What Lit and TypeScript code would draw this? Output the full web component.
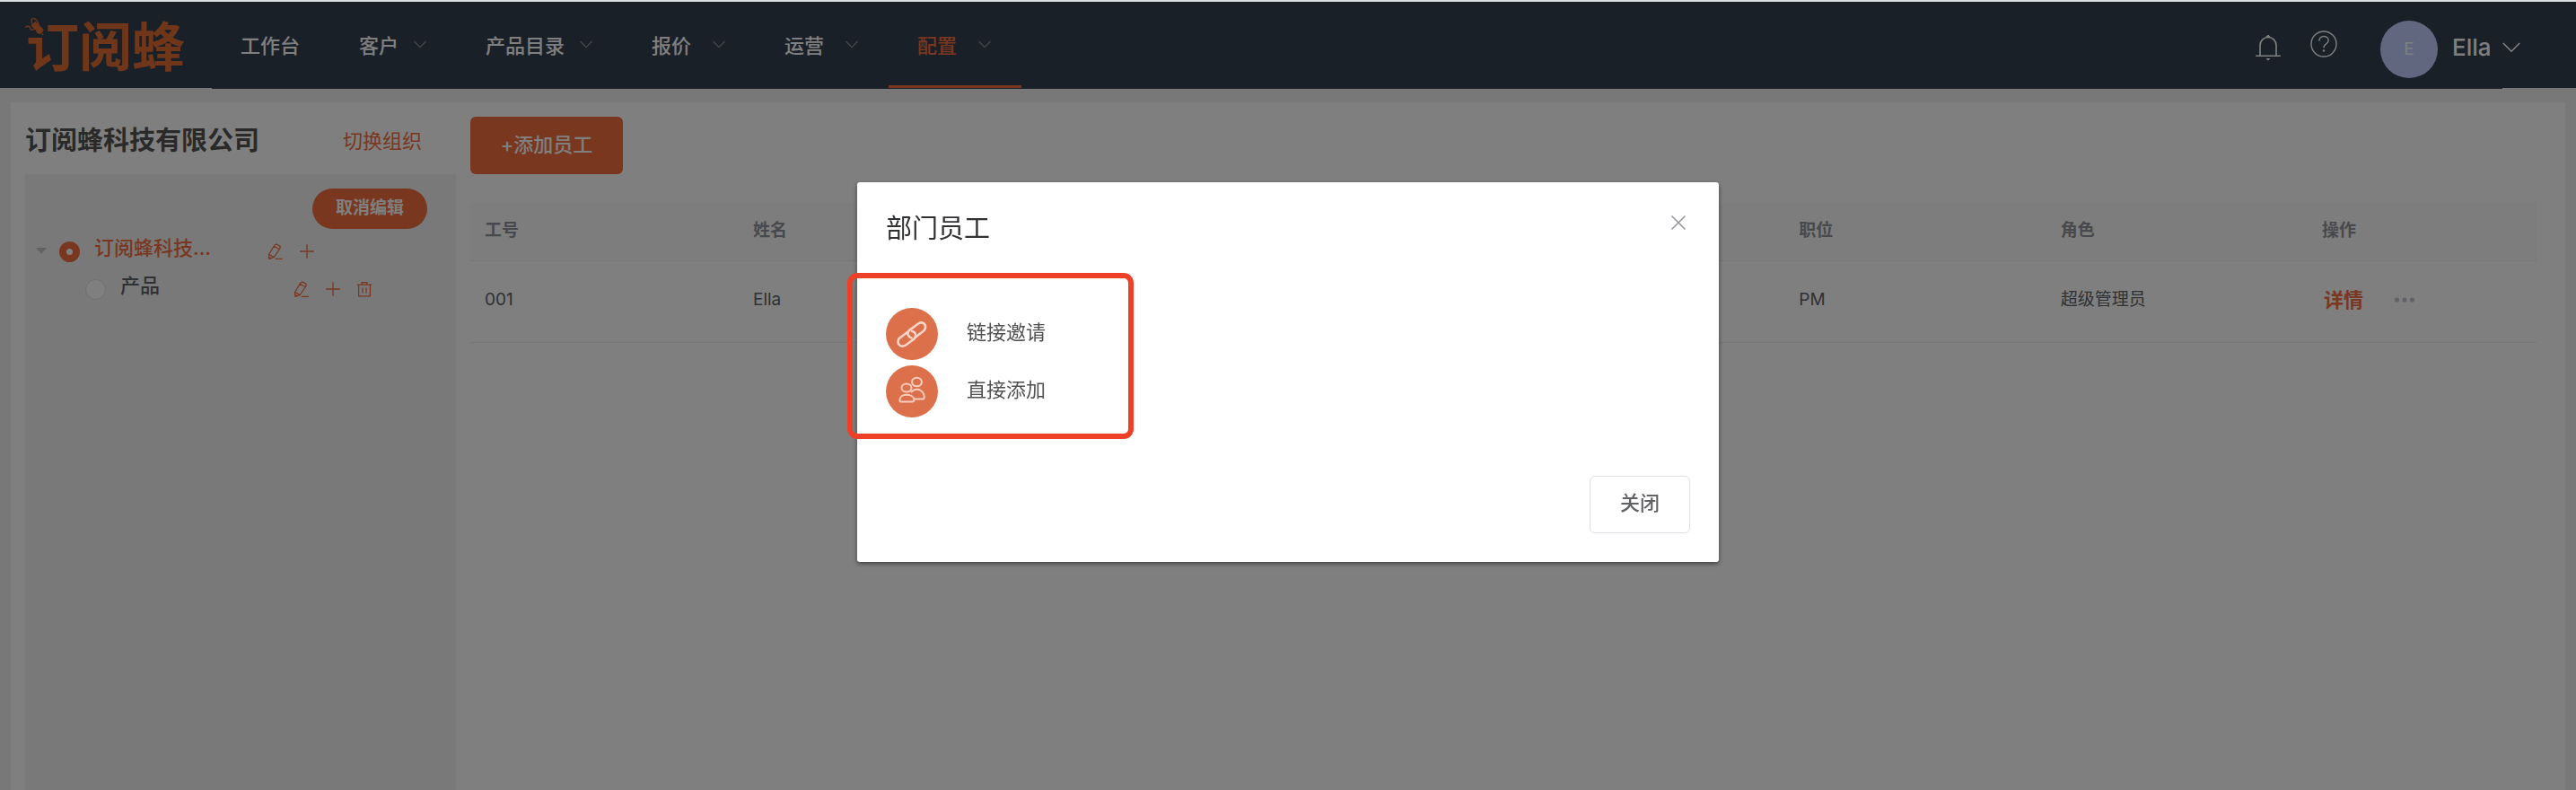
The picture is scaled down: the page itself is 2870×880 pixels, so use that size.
import { LitElement, html, css, svg, nothing } from "lit";
import { customElement, state } from "lit/decorators.js";
import { classMap } from "lit/directives/class-map.js";

interface NavItem {
  label: string;
  menu?: boolean;
  roomy?: boolean;
  active?: boolean;
}

const NAV: NavItem[] = [
  { label: "工作台" },
  { label: "客户", menu: true },
  { label: "产品目录", menu: true },
  { label: "报价", menu: true, roomy: true },
  { label: "运营", menu: true, roomy: true },
  { label: "配置", menu: true, roomy: true, active: true },
];

const COLUMNS = ["工号", "姓名", "", "", "", "职位", "角色"];
const ROWS = [["001", "Ella", "", "", "", "PM", "超级管理员"]];

const stroke = (size: number, body: unknown, width = 1.5) => html`
  <svg width=${size} height=${size} viewBox="0 0 ${size} ${size}" fill="none"
    stroke="currentColor" stroke-width=${width} aria-hidden="true">${body}</svg>`;

const chevron = html`
  <svg width="14" height="9" viewBox="0 0 14 9" fill="none" stroke="currentColor"
    stroke-width="1.3" aria-hidden="true"><path d="M.5 1 7 7.6 13.5 1" /></svg>`;

const pencil = stroke(18, svg`
  <path d="M7.8 2.2 10 1l4.2 2.4-.3 2.4L7.2 15.6 2 17.4l-.6-4.8zM7.2 3.2l6 3.4M1.6 12.4l5.6 3.2M4.4 17l-2.8-2M8.8 17.3h8" />`, 1.2);
const plus = stroke(18, svg`<path d="M9 1.2v15.6M1.2 9h15.6" />`, 1.3);
const trash = stroke(18, svg`
  <path d="M1 4.2h16M2.6 4.2v12.6h12.8V4.2M6.2 4V1.6h5.6V4M7 7.6v6M11 7.6v6" />`, 1.3);

@customElement("app-root")
export class AppRoot extends LitElement {
  @state() private selected = "root";

  static styles = css`
    :host {
      display: block;
      font-family: Inter, "Noto Sans CJK SC", sans-serif;
      font-size: 22px;
      line-height: 32px;
      color: #606266;
    }
    * { box-sizing: border-box; }
    button { font: inherit; cursor: pointer; border: 0; background: none; padding: 0; color: inherit; }
    a { color: inherit; text-decoration: none; }
    svg { display: block; flex: none; }

    .page {
      min-height: 100vh;
      display: flex;
      flex-direction: column;
      border-top: 2px solid #d9dee3;
      background: #f0f0f0;
    }

    .header {
      height: 96px;
      display: flex;
      align-items: flex-start;
      background: #35404f;
      color: #fff;
    }
    .logo {
      position: relative;
      width: 236px;
      height: 96px;
      padding-left: 29px;
      font-family: "Noto Sans CJK SC", sans-serif;
      font-size: 59px;
      font-weight: 700;
      line-height: 94px;
      color: #df6c35;
      white-space: nowrap;
    }
    .bee { position: absolute; left: 28px; top: 16px; }
    .bar {
      flex: 1;
      height: 97px;
      display: flex;
      align-items: flex-start;
      justify-content: space-between;
      background: #35404f;
      border-bottom: 1px solid #45485a;
    }
    .rest { width: 82px; }
    .nav { display: flex; font-weight: 500; }
    .nav-item {
      height: 96px;
      padding: 4px 34px 0 32px;
      display: flex;
      align-items: center;
      justify-content: space-between;
      gap: 17px;
      border-bottom: 3px solid transparent;
      color: #fff;
    }
    .nav-item svg { color: #8a8e96; margin-bottom: 2px; }
    .nav-item.roomy { min-width: 148px; }
    .nav-item.active { color: #f26e40; border-color: #f26e40; }
    .user { display: flex; align-items: center; height: 96px; padding-top: 10px; }
    .tool { align-self: flex-start; }
    .bell { padding: 26px 0 0; margin-right: 33px; }
    .help { padding: 22px 0 0; margin-right: 48px; }
    .account { display: flex; align-items: center; }
    .avatar {
      width: 64px;
      height: 64px;
      margin-right: 16px;
      border-radius: 50%;
      background: #c0ceff;
      color: #fff;
      font-size: 19px;
      line-height: 64px;
      text-align: center;
    }
    .name {
      font-size: 26px;
      font-weight: 500;
      width: 56px;
      padding-bottom: 4px;
      text-align: left;
    }

    .card {
      flex: 1;
      display: flex;
      gap: 16px;
      margin: 16px 12px 0;
      padding: 16px 32px 0 16px;
      background: #fff;
    }
    .side { width: 480px; flex: none; display: flex; flex-direction: column; }
    .org {
      height: 64px;
      padding: 0 38px 10px 0;
      display: flex;
      align-items: center;
      justify-content: space-between;
    }
    .org h1 { margin: 0; font-size: 29px; font-weight: 700; color: #555; line-height: 40px; }
    .org a { color: #f26e40; }
    .tree-box { flex: 1; padding: 16px 32px 0 10px; background: #f3f3f3; display: flex; flex-direction: column; }
    .pill {
      align-self: flex-end;
      width: 128px;
      height: 45px;
      border-radius: 23px;
      background: #f26e40;
      color: #fff;
      font-size: 19px;
      line-height: 40px;
      font-weight: 700;
      padding-bottom: 2px;
    }
    .tree { list-style: none; margin: 4px 0 0; padding: 0; font-weight: 500; }
    .node { height: 42px; display: flex; align-items: center; color: #606266; }
    .node.on { color: #f26e40; }
    .node.child { padding-left: 29px; }
    .caret { width: 28px; color: #c0c4cc; }
    .node label { display: flex; align-items: center; width: 232px; gap: 16px; }
    .node .label { padding-bottom: 8px; width: 136px; white-space: nowrap; }
    .radio {
      appearance: none;
      width: 23px;
      height: 23px;
      margin: 0;
      flex: none;
      border: 1px solid #dcdfe6;
      border-radius: 50%;
      background: #fff;
    }
    .radio:checked { border: 8px solid #f26e40; }
    .actions { display: flex; gap: 17px; color: #f26e40; }

    .main { flex: 1; min-width: 0; }
    .add {
      width: 170px;
      height: 64px;
      border-radius: 6px;
      background: #f26e40;
      color: #fff;
      font-weight: 500;
      padding-bottom: 2px;
    }
    .table {
      width: 100%;
      margin-top: 32px;
      border-collapse: collapse;
      table-layout: fixed;
      font-size: 19px;
      line-height: 30px;
      text-align: left;
    }
    .first { width: 299px; }
    .last { width: 255px; }
    th { height: 64px; padding: 0 16px 2px; background: #fafafa; color: #909399; font-weight: 700; border-bottom: 1px solid #ebeef5; }
    td { height: 91px; padding: 0 16px 4px; color: #606266; border-bottom: 1px solid #ebeef5; }
    .ops { display: flex; align-items: center; gap: 34px; font-size: 22px; }
    .ops a { color: #f26e40; font-weight: 700; margin-left: 2px; }
    .more { color: #c0c4cc; }

    .mask {
      position: fixed;
      inset: 2px 0 0;
      display: flex;
      justify-content: center;
      align-items: flex-start;
      padding-top: 201px;
      background: rgba(0, 0, 0, 0.5);
    }
    .dialog {
      width: 960px;
      max-width: 100%;
      padding: 32px;
      border-radius: 3px;
      background: #fff;
      box-shadow: 0 2px 5px rgba(0, 0, 0, 0.5);
      display: flex;
      flex-direction: column;
    }
    .dialog-head { display: flex; justify-content: space-between; align-items: flex-start; height: 69px; }
    .dialog-head h2 { margin: 0; font-size: 29px; line-height: 40px; font-weight: 400; color: #303133; }
    .close { color: #909399; padding: 4px; }
    .choices {
      align-self: flex-start;
      width: 319px;
      height: 185px;
      margin-left: -43px;
      padding: 33px 37px;
      border: 6px solid #ee4026;
      border-radius: 11px;
      display: flex;
      flex-direction: column;
      gap: 6px;
      color: #505050;
    }
    .choice { display: flex; align-items: center; gap: 32px; }
    .choice span { padding-bottom: 5px; }
    .dialog-foot { display: flex; justify-content: flex-end; margin-top: 41px; }
    .done {
      width: 112px;
      height: 64px;
      border: 1px solid #dcdfe6;
      border-radius: 6px;
      font-weight: 500;
      padding-bottom: 5px;
    }
  `;

  private renderNode(id: string, label: string, child: boolean) {
    return html`
      <li class=${classMap({ node: true, child, on: this.selected === id })}>
        <span class="caret">
          ${child ? nothing : html`<svg width="16" height="8" viewBox="0 0 16 8" fill="currentColor" aria-hidden="true"><path d="M2 0h12L8 7z" /></svg>`}
        </span>
        <label>
          <input class="radio" type="radio" name="dept" .checked=${this.selected === id}
            @change=${() => (this.selected = id)} />
          <span class="label">${label}</span>
        </label>
        <span class="actions">
          <button aria-label="编辑">${pencil}</button>
          <button aria-label="添加">${plus}</button>
          ${child ? html`<button aria-label="删除">${trash}</button>` : nothing}
        </span>
      </li>`;
  }

  render() {
    return html`
      <div class="page">
        <header class="header">
          <div class="logo">
            <svg class="bee" width="22" height="22" viewBox="0 0 22 22" fill="none" stroke="currentColor" stroke-width="1.4" aria-hidden="true">
              <path d="M11 14C7 9 6 4 8.500 2.500 12 1.500 16 8 14.500 13M11 14C8 16 5 15.500 5.500 12.500 4.500 10.500 2.500 11 0 12.500" />
              <ellipse cx="16" cy="16.500" rx="3.600" ry="3" fill="currentColor" stroke="none" />
              <path d="M12.500 14.500c2-2 5-1.500 6.500 0M18.500 19.500l1.500 1.500" />
            </svg>
            订阅蜂
          </div>
          <div class="bar">
            <nav class="nav">
              ${NAV.map((n) => html`
                <a href="#" class=${classMap({ "nav-item": true, roomy: !!n.roomy, active: !!n.active })}>
                  ${n.label}${n.menu ? chevron : nothing}
                </a>`)}
            </nav>
            <div class="user">
              <button class="tool bell" aria-label="通知">
                <svg width="28" height="30" viewBox="0 0 28 30" fill="none" stroke="currentColor" stroke-width="1.600" aria-hidden="true">
                  <path d="M.2 24.200h27.600M5 24V12.500a9 9 0 0 1 18 0V24" />
                  <path d="M11.500 3.300 14 1l2.500 2.300M12.200 27.500h3.600L14 29z" fill="currentColor" stroke-width="1" />
                </svg>
              </button>
              <button class="tool help" aria-label="帮助">
                <svg width="30" height="30" viewBox="0 0 30 30" fill="none" stroke="currentColor" stroke-width="1.400" aria-hidden="true">
                  <circle cx="15" cy="15" r="14" />
                  <path d="M9.800 11.800c0-7 10.400-7 10.400-.8 0 4.200-5.200 3.600-5.200 8.200" />
                  <circle cx="15" cy="22.500" r="1.200" fill="currentColor" stroke="none" />
                </svg>
              </button>
              <button class="account">
                <span class="avatar">E</span>
                <span class="name">Ella</span>
              </button>
            </div>
          </div>
          <div class="rest">
            <svg width="20" height="96" viewBox="0 0 20 96" fill="none" stroke="currentColor" stroke-width="1.600" aria-hidden="true">
              <path d="m.8 46 9.200 9.200L19.200 46" />
            </svg>
          </div>
        </header>

        <div class="card">
          <aside class="side">
            <div class="org">
              <h1>订阅蜂科技有限公司</h1>
              <a href="#">切换组织</a>
            </div>
            <div class="tree-box">
              <button class="pill">取消编辑</button>
              <ul class="tree">
                ${this.renderNode("root", "订阅蜂科技...", false)}
                ${this.renderNode("product", "产品", true)}
              </ul>
            </div>
          </aside>
          <main class="main">
            <button class="add">+添加员工</button>
            <table class="table">
              <colgroup>
                <col class="first" />
                ${COLUMNS.slice(1).map(() => html`<col />`)}
                <col class="last" />
              </colgroup>
              <thead>
                <tr>${COLUMNS.map((c) => html`<th scope="col">${c}</th>`)}<th scope="col">操作</th></tr>
              </thead>
              <tbody>
                ${ROWS.map((r) => html`
                  <tr>
                    ${r.map((c) => html`<td>${c}</td>`)}
                    <td>
                      <div class="ops">
                        <a href="#">详情</a>
                        <button class="more" aria-label="更多">
                          <svg width="24" height="6" viewBox="0 0 24 6" fill="currentColor" aria-hidden="true">
                            <circle cx="3.500" cy="3" r="2.600" /><circle cx="12" cy="3" r="2.600" /><circle cx="20.500" cy="3" r="2.600" />
                          </svg>
                        </button>
                      </div>
                    </td>
                  </tr>`)}
              </tbody>
            </table>
          </main>
        </div>
      </div>

      <div class="mask">
        <section class="dialog" role="dialog" aria-modal="true" aria-labelledby="dialog-title">
          <div class="dialog-head">
            <h2 id="dialog-title">部门员工</h2>
            <button class="close" aria-label="关闭">${stroke(18, svg`<path d="m1.500 1.500 15 15M16.500 1.500l-15 15" />`)}</button>
          </div>
          <div class="choices">
            <button class="choice">
              <svg width="58" height="58" viewBox="0 0 58 58" fill="none" stroke="#f8d5c8" stroke-width="2.600" stroke-linecap="round" aria-hidden="true">
                <circle cx="29" cy="29" r="29" fill="#dc704b" stroke="none" />
                <path d="M28.500 33.500C24.500 32 23 28 26 25L36 17.500C40 15 44.500 17 44 22 43.800 24 42.500 25.500 41 26.500L33 32.500" />
                <path d="M29 26C33 26.500 34.500 31 31.500 34.500L22 41.500C18 44 13.500 42 13.500 37.500 13.500 35.500 14.500 34 16 33L24 27" />
              </svg>
              <span>链接邀请</span>
            </button>
            <button class="choice">
              <svg width="58" height="58" viewBox="0 0 58 58" fill="none" stroke="#f8cdbd" stroke-width="2" stroke-linecap="round" stroke-linejoin="round" aria-hidden="true">
                <circle cx="29" cy="29" r="29" fill="#dc704b" stroke="none" />
                <ellipse cx="34.500" cy="18.500" rx="5.500" ry="4.800" />
                <ellipse cx="23" cy="25" rx="5.500" ry="4.600" />
                <path d="M28.500 29.500C32 25.500 38 26 41 30 43 33 43 36 42 37.500H32" />
                <path d="M15.500 38C16 31 30 31 31.500 38 31.500 40 30.500 40.500 29 40.500H17C15.500 40.500 15.200 39.500 15.500 38z" />
              </svg>
              <span>直接添加</span>
            </button>
          </div>
          <div class="dialog-foot"><button class="done">关闭</button></div>
        </section>
      </div>
    `;
  }
}
